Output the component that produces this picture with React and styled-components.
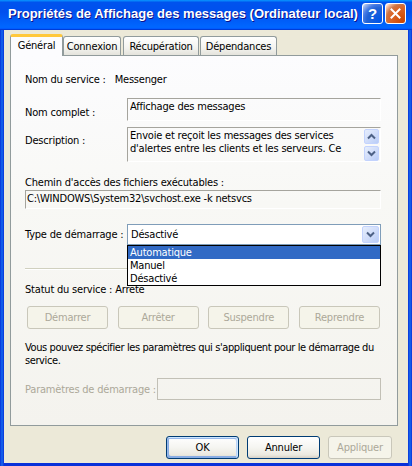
import React from "react";
import styled, { createGlobalStyle, css } from "styled-components";

const GlobalStyle = createGlobalStyle`
  html, body { margin: 0; padding: 0; background: #ece9d8; }
  body { font-family: "DejaVu Sans Condensed", "Liberation Sans", sans-serif; font-size: 11px; }
  * { box-sizing: border-box; }
`;

const FONT = `"DejaVu Sans Condensed", "Liberation Sans", sans-serif`;

const Window = styled.div`
  width: 412px;
  height: 466px;
  display: flex;
  flex-direction: column;
  background: linear-gradient(90deg, #0831d9 0, #166aee 2px, #0831d9 4px, #0831d9 408px, #166aee 410px, #0831d9 412px);
`;

const TitleBar = styled.div`
  height: 30px;
  flex: none;
  display: flex;
  align-items: center;
  padding: 0 6px 0 8px;
  background: linear-gradient(180deg, #0997ff, #0053ee 8%, #0050ee 40%, #06f 88%, #06f 93%, #005bff 95%, #003dd7 96%, #003dd7);
`;

const TitleText = styled.div`
  flex: 1;
  color: #fff;
  font-family: "Liberation Sans", sans-serif;
  font-weight: bold;
  font-size: 13px;
  text-shadow: 1px 1px #0f1089;
  white-space: nowrap;
  margin-top: -3px;
`;

const CaptionButton = styled.div`
  width: 21px;
  height: 21px;
  margin-left: 2px;
  margin-top: -3px;
  border: 1px solid #fff;
  border-radius: 3px;
  display: flex;
  align-items: center;
  justify-content: center;
  color: #fff;
  font-family: "Liberation Sans", sans-serif;
  font-weight: bold;
  font-size: 15px;
  ${(p) =>
    p.$variant === "close"
      ? css`
          background: radial-gradient(circle at 90% 90%, #cc4600 0%, #dc6527 55%, #cd7546 70%, #ffccb2 90%, #fff 100%);
        `
      : css`
          background: radial-gradient(circle at 90% 90%, #0054e9 0%, #2263d5 55%, #4479e4 70%, #a3bbec 90%, #fff 100%);
        `}
`;

const Body = styled.div`
  flex: 1;
  margin: 0 4px 3px 4px;
  background: #ece9d8;
  display: flex;
  flex-direction: column;
  padding-top: 4px;
  font-family: ${FONT};
  font-size: 11px;
  letter-spacing: -0.2px;
  color: #000;
`;

const TabRow = styled.div`
  display: flex;
  align-items: flex-end;
  height: 22px;
  margin: 0 10px 0 6px;
`;

const Tab = styled.div`
  width: ${(p) => p.$w}px;
  margin-left: ${(p) => p.$ml || 0}px;
  display: flex;
  align-items: center;
  justify-content: center;
  border: 1px solid #919b9c;
  border-bottom: none;
  border-radius: 3px 3px 0 0;
  white-space: nowrap;
  ${(p) =>
    p.$active
      ? css`
          position: relative;
          z-index: 2;
          height: 22px;
          background: #fcfcfe;
          border-top: 3px solid #ffc83c;
          padding-bottom: 2px;
        `
      : css`
          height: 19px;
          margin-bottom: 1px;
          background: linear-gradient(180deg, #ffffff 0%, #f3f3ef 60%, #e4e3dc 100%);
          padding-top: 1px;
        `}
`;

const Panel = styled.div`
  margin: -1px 10px 0 6px;
  height: 371px;
  border: 1px solid #919b9c;
  background: linear-gradient(180deg, #fcfcfe 0%, #f8f8f5 40%, #f4f3ee 100%);
  display: flex;
  flex-direction: column;
  padding: 0 16px 0 14px;
`;

const Line = styled.div`
  height: 13px;
  line-height: 13px;
  margin-top: ${(p) => p.$mt || 0}px;
  white-space: nowrap;
  color: ${(p) => (p.$disabled ? "#aca899" : "#000")};
`;

const Value = styled.span`
  margin-left: ${(p) => p.$ml}px;
`;

const FieldRow = styled.div`
  display: flex;
  align-items: ${(p) => (p.$center ? "center" : "flex-start")};
  margin-top: ${(p) => p.$mt || 0}px;
  position: relative;
`;

const Label = styled.div`
  width: ${(p) => p.$w}px;
  flex: none;
  line-height: 13px;
  padding-top: ${(p) => p.$pt || 0}px;
  white-space: nowrap;
  color: ${(p) => (p.$disabled ? "#aca899" : "#000")};
`;

const StaticBox = styled.div`
  flex: 1;
  height: ${(p) => p.$h}px;
  border-style: solid;
  border-width: 1px;
  border-color: #a5a49d #ffffff #ffffff #a5a49d;
  padding: ${(p) => p.$pad || "1px 2px"};
  line-height: 13px;
  display: flex;
  position: relative;
`;

const BoxText = styled.div`
  flex: 1;
  white-space: pre-line;
  overflow: hidden;
`;

const ScrollCol = styled.div`
  width: 16px;
  display: flex;
  flex-direction: column;
  gap: 2px;
`;

const ArrowButton = styled.div`
  width: ${(p) => p.$w || 15}px;
  height: ${(p) => p.$h || 15}px;
  border: 1px solid #c3d3fd;
  border-radius: 2px;
  background: linear-gradient(135deg, #e6eefc 0%, #d2defa 50%, #b9cdf7 100%);
  display: flex;
  align-items: center;
  justify-content: center;
`;

const Combo = styled.div`
  flex: 1;
  height: 21px;
  border: 1px solid #7f9db9;
  background: #fff;
  display: flex;
  align-items: center;
  padding: 0 1px 0 3px;
  position: relative;
`;

const ComboText = styled.div`
  flex: 1;
`;

const DropList = styled.div`
  position: absolute;
  top: 20px;
  left: -1px;
  right: -1px;
  border: 1px solid #000;
  background: #fff;
  z-index: 10;
`;

const DropItem = styled.div`
  height: 13px;
  line-height: 13px;
  padding-left: 2px;
  ${(p) =>
    p.$selected &&
    css`
      background: #316ac5;
      color: #fff;
    `}
`;

const Separator = styled.div`
  margin-top: ${(p) => p.$mt}px;
  height: 2px;
  border-top: 1px solid #d0d0bf;
  border-bottom: 1px solid #fff;
`;

const ButtonRow = styled.div`
  display: flex;
  justify-content: ${(p) => p.$justify || "space-between"};
  gap: ${(p) => p.$gap || 0}px;
  margin-top: ${(p) => p.$mt || 0}px;
  padding: ${(p) => p.$pad || "0"};
`;

const Button = styled.div`
  width: ${(p) => p.$w}px;
  height: ${(p) => p.$h || 23}px;
  border-radius: 3px;
  display: flex;
  align-items: center;
  justify-content: center;
  white-space: nowrap;
  ${(p) =>
    p.$disabled
      ? css`
          border: 1px solid #c9c7ba;
          background: #f5f4ea;
          color: #aca899;
        `
      : css`
          border: 1px solid #003c74;
          color: #000;
          background: linear-gradient(180deg, #ffffff 0%, #f5f5f1 50%, #ebe9e0 85%, #d6d0c5 100%);
        `}
  ${(p) =>
    p.$default &&
    css`
      box-shadow: inset -1px 1px #cee7ff, inset 1px 2px #98b8ea, inset -2px 2px #bcd4f6, inset 1px -1px #89ade4, inset 2px -2px #89ade4;
    `}
`;

const Paragraph = styled.div`
  margin-top: ${(p) => p.$mt}px;
  line-height: 13px;
  white-space: nowrap;
  letter-spacing: -0.4px;
`;

const DisabledEdit = styled.div`
  flex: 1;
  height: 22px;
  border: 1px solid #c2c0b6;
  background: transparent;
`;

const Chevron = ({ up }) => (
  <svg width="9" height="7" viewBox="0 0 9 7">
    <polyline
      points={up ? "1,5.5 4.5,2 8,5.5" : "1,1.5 4.5,5 8,1.5"}
      fill="none"
      stroke="#4d6185"
      strokeWidth="2"
    />
  </svg>
);

const CloseIcon = () => (
  <svg width="11" height="11" viewBox="0 0 11 11">
    <path d="M1.5 1.5 L9.5 9.5 M9.5 1.5 L1.5 9.5" stroke="#fff" strokeWidth="2" strokeLinecap="square" />
  </svg>
);

export default function App() {
  return (
    <>
      <GlobalStyle />
      <Window>
        <TitleBar>
          <TitleText>Propriétés de Affichage des messages (Ordinateur local)</TitleText>
          <CaptionButton $variant="help">?</CaptionButton>
          <CaptionButton $variant="close">
            <CloseIcon />
          </CaptionButton>
        </TitleBar>
        <Body>
          <TabRow>
            <Tab $w={53} $active>Général</Tab>
            <Tab $w={58}>Connexion</Tab>
            <Tab $w={76} $ml={2}>Récupération</Tab>
            <Tab $w={77} $ml={1}>Dépendances</Tab>
          </TabRow>
          <Panel>
            <Line $mt={17}>
              Nom du service :<Value $ml={9}>Messenger</Value>
            </Line>

            <FieldRow $mt={12}>
              <Label $w={102} $pt={8}>Nom complet :</Label>
              <StaticBox $h={23} $pad="1px 2px">
                <BoxText>Affichage des messages</BoxText>
              </StaticBox>
            </FieldRow>

            <FieldRow $mt={6}>
              <Label $w={102} $pt={7}>Description :</Label>
              <StaticBox $h={35} $pad="1px 0 0 2px">
                <BoxText>
                  {"Envoie et reçoit les messages des services\nd'alertes entre les clients et les serveurs. Ce"}
                </BoxText>
                <ScrollCol>
                  <ArrowButton>
                    <Chevron up />
                  </ArrowButton>
                  <ArrowButton>
                    <Chevron />
                  </ArrowButton>
                </ScrollCol>
              </StaticBox>
            </FieldRow>

            <Line $mt={14}>Chemin d'accès des fichiers exécutables :</Line>
            <FieldRow $mt={1}>
              <StaticBox $h={19} $pad="1px 1px">
                <BoxText>C:\WINDOWS\System32\svchost.exe -k netsvcs</BoxText>
              </StaticBox>
            </FieldRow>

            <FieldRow $mt={15} $center>
              <Label $w={102}>Type de démarrage :</Label>
              <Combo>
                <ComboText>Désactivé</ComboText>
                <ArrowButton $w={17} $h={17}>
                  <Chevron />
                </ArrowButton>
                <DropList>
                  <DropItem $selected>Automatique</DropItem>
                  <DropItem>Manuel</DropItem>
                  <DropItem>Désactivé</DropItem>
                </DropList>
              </Combo>
            </FieldRow>

            <Separator $mt={23} />

            <Line $mt={13}>Statut du service : Arrêté</Line>

            <ButtonRow $mt={10} $pad="0 1px 0 2px">
              <Button $w={81} $disabled>Démarrer</Button>
              <Button $w={81} $disabled>Arrêter</Button>
              <Button $w={81} $disabled>Suspendre</Button>
              <Button $w={81} $disabled>Reprendre</Button>
            </ButtonRow>

            <Paragraph $mt={12}>
              Vous pouvez spécifier les paramètres qui s'appliquent pour le démarrage du
              <br />
              service.
            </Paragraph>

            <FieldRow $mt={11} $center>
              <Label $w={132} $disabled>Paramètres de démarrage :</Label>
              <DisabledEdit />
            </FieldRow>
          </Panel>
          <ButtonRow $mt={10} $justify="flex-end" $gap={8} $pad="0 16px 0 0">
            <Button $w={73} $default>OK</Button>
            <Button $w={73}>Annuler</Button>
            <Button $w={64} $disabled>Appliquer</Button>
          </ButtonRow>
        </Body>
      </Window>
    </>
  );
}
